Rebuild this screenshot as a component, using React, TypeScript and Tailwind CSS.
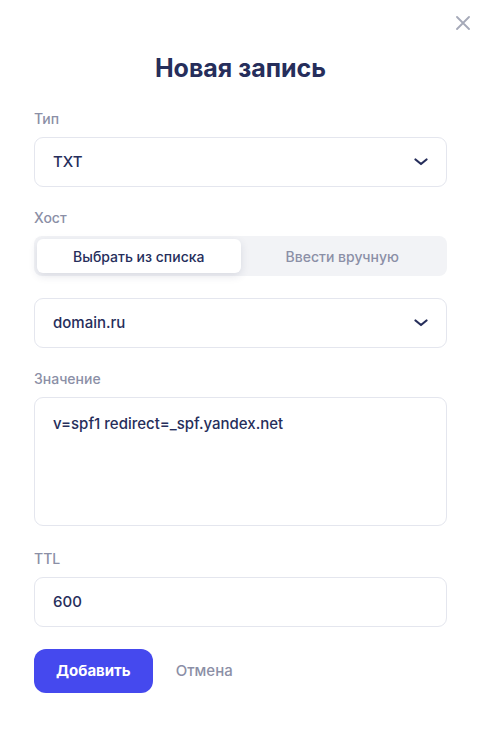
import React from "react";

function Chevron() {
  return (
    <svg width="14" height="8" viewBox="0 0 14 8" fill="none" className="shrink-0">
      <path d="M1.5 1.5L7 6L12.5 1.5" stroke="#262e5b" strokeWidth="2.2" strokeLinecap="round" strokeLinejoin="round" />
    </svg>
  );
}

function Label({ children }: { children: React.ReactNode }) {
  return <div className="text-[14px] leading-[20px] font-medium text-[#8b8fa6] mb-[8px]">{children}</div>;
}

export default function App() {
  return (
    <div
      className="relative w-[484px] h-[733px] bg-white pl-[34px] pr-[37px] pt-[52px]"
      style={{ fontFamily: "Inter, 'Noto Sans', sans-serif" }}
    >
      <button className="absolute right-[13px] top-[15px] w-[16px] h-[16px] flex items-center justify-center">
        <svg width="14" height="14" viewBox="0 0 14 14" fill="none">
          <path d="M1 1L13 13M13 1L1 13" stroke="#a5a9b8" strokeWidth="1.8" strokeLinecap="round" />
        </svg>
      </button>

      <h1 className="text-center text-[25px] leading-[32px] font-bold text-[#262e5b]">Новая запись</h1>

      <div className="mt-[25px]">
        <Label>Тип</Label>
        <div className="h-[50px] rounded-[9px] border border-[#e4e6ee] flex items-center justify-between pl-[18px] pr-[18px]">
          <span className="text-[15px] font-medium text-[#262e5b]">TXT</span>
          <Chevron />
        </div>
      </div>

      <div className="mt-[21px]">
        <Label>Хост</Label>
        <div className="h-[40px] rounded-[8px] bg-[#f2f3f6] p-[3px] flex">
          <div className="flex-1 rounded-[6px] bg-white shadow-[0_3px_8px_rgba(30,40,80,0.12)] flex items-center justify-center text-[14px] font-medium text-[#262e5b]">
            Выбрать из списка
          </div>
          <div className="flex-1 flex items-center justify-center text-[14px] font-medium text-[#8b8fa6]">
            Ввести вручную
          </div>
        </div>
        <div className="mt-[22px] h-[50px] rounded-[9px] border border-[#e4e6ee] flex items-center justify-between pl-[18px] pr-[18px]">
          <span className="text-[15px] font-medium text-[#262e5b]">domain.ru</span>
          <Chevron />
        </div>
      </div>

      <div className="mt-[21px]">
        <Label>Значение</Label>
        <div className="h-[129px] rounded-[9px] border border-[#e4e6ee] pl-[18px] pr-[18px] pt-[13px]">
          <span className="text-[15px] leading-[20px] font-medium text-[#262e5b]">v=spf1 redirect=_spf.yandex.net</span>
        </div>
      </div>

      <div className="mt-[23px]">
        <Label>TTL</Label>
        <div className="h-[50px] rounded-[9px] border border-[#e4e6ee] flex items-center pl-[18px] pr-[18px]">
          <span className="text-[15px] font-medium text-[#262e5b]">600</span>
        </div>
      </div>

      <div className="mt-[22px] flex items-center gap-[23px]">
        <button className="h-[44px] px-[22px] rounded-[12px] bg-[#4549ee] text-white text-[15px] font-bold">Добавить</button>
        <button className="text-[15px] font-medium text-[#8b8fa6]">Отмена</button>
      </div>
    </div>
  );
}
